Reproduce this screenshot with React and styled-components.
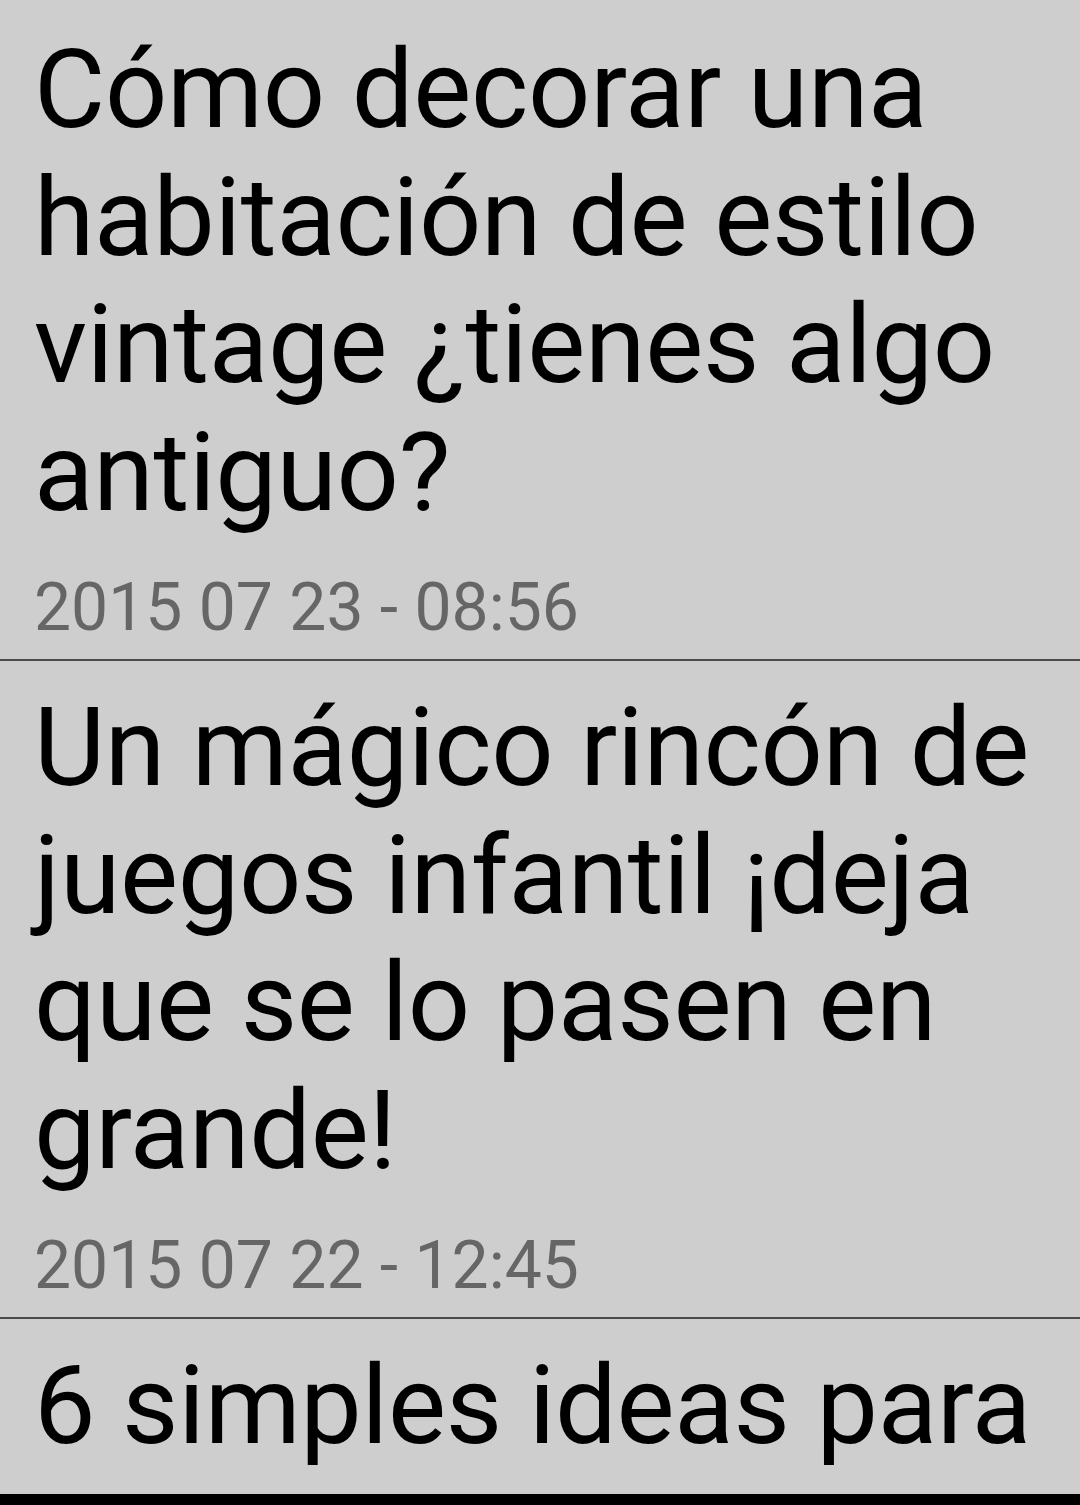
import React from 'react';
import styled, {createGlobalStyle} from 'styled-components';

const articles = [
    {id: 1, title: 'Cómo decorar una habitación de estilo vintage ¿tienes algo antiguo?', date: '2015 07 23 - 08:56'},
    {id: 2, title: 'Un mágico rincón de juegos infantil ¡deja que se lo pasen en grande!', date: '2015 07 22 - 12:45'},
    {id: 3, title: '6 simples ideas para'},
]

const App = () => {
    return (
        <>
            <GlobalStyle/>
            <StyledScreen>
                <StyledList>
                    {articles.map((item, index) => (
                        <StyledItem key={item.id} $first={index === 0} $last={index === articles.length - 1}>
                            <StyledTitle>{item.title}</StyledTitle>
                            {item.date && <StyledDate>{item.date}</StyledDate>}
                        </StyledItem>
                    ))}
                </StyledList>
                <StyledBottomBar/>
            </StyledScreen>
        </>
    )
}

export default App;

const GlobalStyle = createGlobalStyle`
  html, body {
    margin: 0;
    padding: 0;
    background: #cecece;
  }
`

const StyledScreen = styled.div`
  display: flex;
  flex-direction: column;
  width: 1080px;
  height: 1505px;
  overflow: hidden;
  background: #cecece;
  font-family: Roboto, "Noto Sans", sans-serif;
`

const StyledList = styled.ul`
  flex: 1;
  min-height: 0;
  margin: 0;
  padding: 0;
  list-style: none;
  overflow: hidden;
`

const StyledItem = styled.li`
  padding: ${({$first}) => $first ? '26px' : '23px'} 20px 11px 34px;
  border-bottom: ${({$last}) => $last ? 'none' : '2px solid #4a4a4a'};
`

const StyledTitle = styled.h2`
  margin: 0;
  font-size: 109.5px;
  font-weight: 400;
  line-height: 127.5px;
  color: #000;
  letter-spacing: -0.3px;
`

const StyledDate = styled.p`
  margin: 32px 0 0;
  font-size: 66px;
  line-height: 80px;
  color: #666;
`

const StyledBottomBar = styled.div`
  height: 11px;
  background: #000;
  flex-shrink: 0;
`
